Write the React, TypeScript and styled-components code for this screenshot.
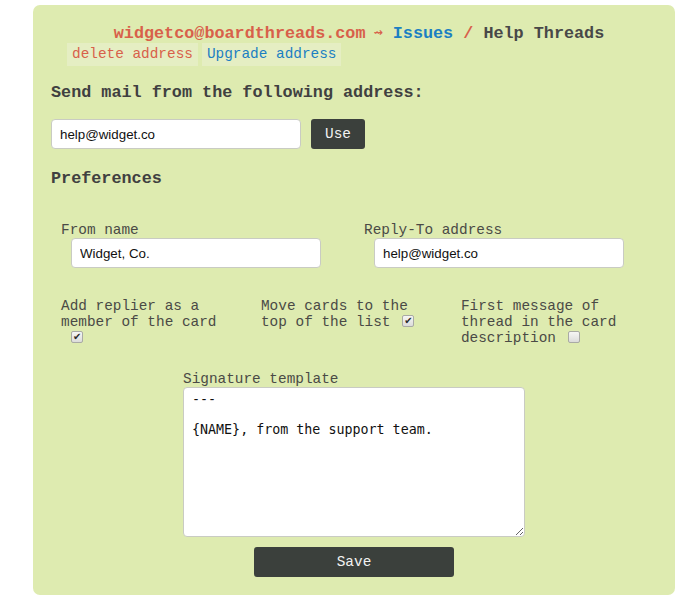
import React from "react";
import styled, { createGlobalStyle } from "styled-components";

const Global = createGlobalStyle`
  html, body { margin: 0; padding: 0; background: #ffffff; }
  body { font-family: "Liberation Mono", monospace; }
  * { box-sizing: border-box; }
`;

const Page = styled.div`
  padding: 5px 0 14px 33px;
`;

const Panel = styled.div`
  width: 642px;
  background: #deebb0;
  border-radius: 7px;
  padding: 18px 18px 18px 18px;
  color: #444444;
`;

const Title = styled.h1`
  margin: 0;
  padding: 1px 0 0 10px;
  text-align: center;
  font-family: "Liberation Mono", monospace;
  font-size: 16.8px;
  font-weight: bold;
  line-height: 18px;
  white-space: nowrap;
`;

const Crumb = styled.a<{ $tone: "red" | "blue" | "dark" }>`
  text-decoration: none;
  color: ${(p) => (p.$tone === "red" ? "#d8604a" : p.$tone === "blue" ? "#1b7fc2" : "#484848")};
`;

const Arrow = styled.span`
  display: inline-block;
  margin: 0 10px 0 8px;
  font-family: "DejaVu Sans", sans-serif;
  font-size: 11px;
  font-weight: bold;
  color: #d8604a;
  vertical-align: 2px;
`;

const LinkRow = styled.div`
  display: flex;
  gap: 4px;
  margin-left: 16px;
`;

const LinkBox = styled.a<{ $tone: "red" | "blue" }>`
  display: block;
  padding: 4px 5px;
  line-height: 15px;
  font-size: 14.4px;
  background: #e5eec3;
  text-decoration: none;
  color: ${(p) => (p.$tone === "red" ? "#d8604a" : "#1b7fc2")};
`;

const Heading = styled.h2<{ $top: number }>`
  margin: ${(p) => p.$top}px 0 0;
  font-family: "Liberation Mono", monospace;
  font-size: 16.8px;
  font-weight: bold;
  line-height: 20px;
  color: #404040;
`;

const AddressRow = styled.div`
  display: flex;
  gap: 10px;
  margin-top: 16px;
`;

const TextInput = styled.input<{ $indent?: number }>`
  display: block;
  width: 250px;
  height: 30px;
  margin-left: ${(p) => p.$indent ?? 0}px;
  padding: 0 8px;
  border: 1px solid #c9cbc3;
  border-radius: 4px;
  background: #ffffff;
  font-family: "Liberation Sans", Arial, sans-serif;
  font-size: 13.33px;
  color: #111111;
  outline: none;
`;

const DarkButton = styled.button<{ $width?: number }>`
  height: 30px;
  width: ${(p) => (p.$width ? `${p.$width}px` : "auto")};
  padding: 0 14px;
  border: none;
  border-radius: 3px;
  background: #3b403c;
  color: #f2f2f2;
  font-family: "Liberation Mono", monospace;
  font-size: 14.4px;
  cursor: pointer;
`;

const TwoCols = styled.div`
  display: grid;
  grid-template-columns: 50% 50%;
  margin-top: 33px;
`;

const Field = styled.label`
  display: block;
  padding: 0 10px;
  font-size: 14.4px;
  line-height: 16px;
  color: #4a4a46;
`;

const ThreeCols = styled.div`
  display: grid;
  grid-template-columns: repeat(3, 33%);
  margin-top: 30px;
`;

const Option = styled.label`
  display: block;
  padding: 0 10px;
  font-size: 14.4px;
  line-height: 16px;
  color: #4a4a46;
`;

const Check = styled.input<{ $lead?: number }>`
  appearance: none;
  -webkit-appearance: none;
  position: relative;
  width: 12px;
  height: 12px;
  margin: 0 0 0 ${(p) => p.$lead ?? 3}px;
  vertical-align: -1px;
  border: 1px solid #a9aaa5;
  border-radius: 2px;
  background: linear-gradient(#f6f6f4, #dcdcda);
  &:checked::after {
    content: "✔";
    position: absolute;
    left: 1px;
    top: -2px;
    font-family: "DejaVu Sans", sans-serif;
    font-size: 10px;
    line-height: 14px;
    color: #2a2a2a;
  }
`;

const Signature = styled.div`
  width: 342px;
  margin: 25px auto 0;
`;

const SigLabel = styled.label`
  display: block;
  font-size: 14.4px;
  line-height: 16px;
  color: #4a4a46;
`;

const SigArea = styled.textarea`
  display: block;
  width: 342px;
  height: 150px;
  margin: 0;
  padding: 4px 8px;
  border: 1px solid #c9cbc3;
  border-radius: 4px;
  background: #ffffff;
  font-family: "DejaVu Sans Mono", monospace;
  font-size: 13.33px;
  color: #111111;
  outline: none;
`;

const SaveWrap = styled.div`
  display: flex;
  justify-content: center;
  margin-top: 10px;
`;

export default function App() {
  return (
    <>
      <Global />
      <Page>
        <Panel>
          <Title>
            <Crumb $tone="red" href="#">widgetco@boardthreads.com</Crumb>
            <Arrow>⇝</Arrow>
            <Crumb $tone="blue" href="#">Issues</Crumb>
            <Crumb $tone="red" as="span"> / </Crumb>
            <Crumb $tone="dark" as="span">Help Threads</Crumb>
          </Title>
          <LinkRow>
            <LinkBox $tone="red" href="#">delete address</LinkBox>
            <LinkBox $tone="blue" href="#">Upgrade address</LinkBox>
          </LinkRow>

          <Heading $top={17}>Send mail from the following address:</Heading>
          <AddressRow>
            <TextInput defaultValue="help@widget.co" />
            <DarkButton>Use</DarkButton>
          </AddressRow>

          <Heading $top={20}>Preferences</Heading>
          <TwoCols>
            <Field>
              From name
              <TextInput $indent={10} defaultValue="Widget, Co." />
            </Field>
            <Field>
              Reply-To address
              <TextInput $indent={10} defaultValue="help@widget.co" />
            </Field>
          </TwoCols>

          <ThreeCols>
            <Option>
              Add replier as a member of the card <Check type="checkbox" defaultChecked $lead={10} />
            </Option>
            <Option>
              Move cards to the top of the list <Check type="checkbox" defaultChecked />
            </Option>
            <Option>
              First message of thread in the card description <Check type="checkbox" />
            </Option>
          </ThreeCols>

          <Signature>
            <SigLabel>Signature template</SigLabel>
            <SigArea defaultValue={"---\n\n{NAME}, from the support team."} />
          </Signature>
          <SaveWrap>
            <DarkButton $width={200}>Save</DarkButton>
          </SaveWrap>
        </Panel>
      </Page>
    </>
  );
}
